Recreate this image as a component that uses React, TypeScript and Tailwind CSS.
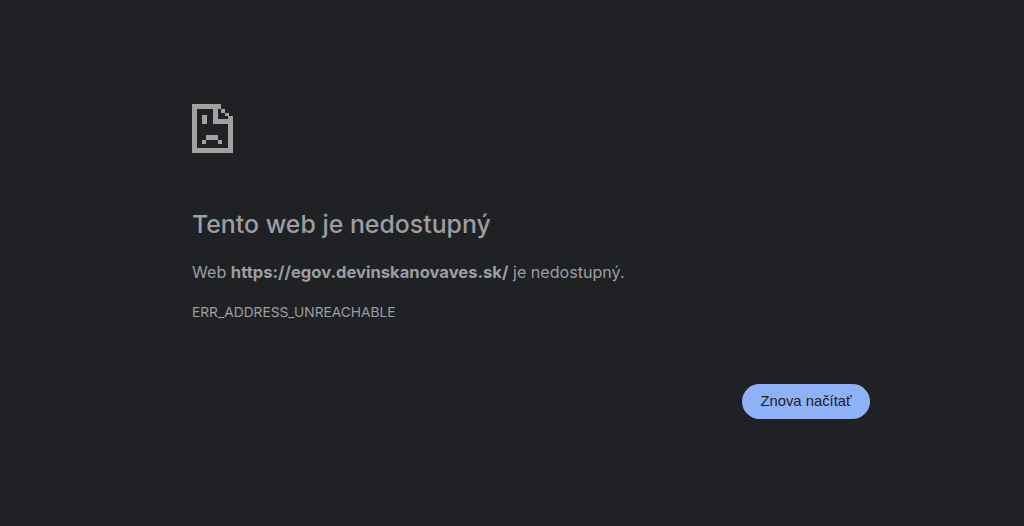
import React from 'react';

const SadFileIcon = () => (
  <svg width="41" height="49" viewBox="0 0 41 49" fill="#a1a1a1" className="block" shapeRendering="crispEdges">
    <path d="M0 0H29V5H5V44H36V12H41V49H0Z" />
    <path d="M21 5H26V15H36V20H21Z" />
    <path d="M29 5H33V9H29ZM33 9H37V12H33Z" />
    <path d="M10 11H15V20H10Z" />
    <path d="M10 36H14V40H10ZM14 31H26V36H14ZM26 36H30V40H26Z" />
  </svg>
);

export default function App() {
  return (
    <div className="h-[526px] w-[1024px] overflow-hidden bg-[#202124] font-['Inter',sans-serif] text-[#9c9ea2]">
      <div className="ml-[192px] w-[678px] pt-[104px]">
        <SadFileIcon />
        <h1 className="mt-[56px] text-[24.85px] leading-[30px] font-medium">Tento web je nedostupný</h1>
        <p className="mt-[21px] text-[16.1px] leading-[24px]">
          Web <strong className="text-[16.6px] font-bold">https://egov.devinskanovaves.sk/</strong> je nedostupný.
        </p>
        <div className="mt-[20px] text-[13.75px] leading-[16px]">ERR_ADDRESS_UNREACHABLE</div>
        <div className="mt-[64px] flex justify-end">
          <button type="button" className="h-[35px] w-[128px] rounded-full bg-[#8fb1f6] text-[14.8px] text-[#202124] font-['Liberation_Sans',sans-serif]">Znova načítať</button>
        </div>
      </div>
    </div>
  );
}
